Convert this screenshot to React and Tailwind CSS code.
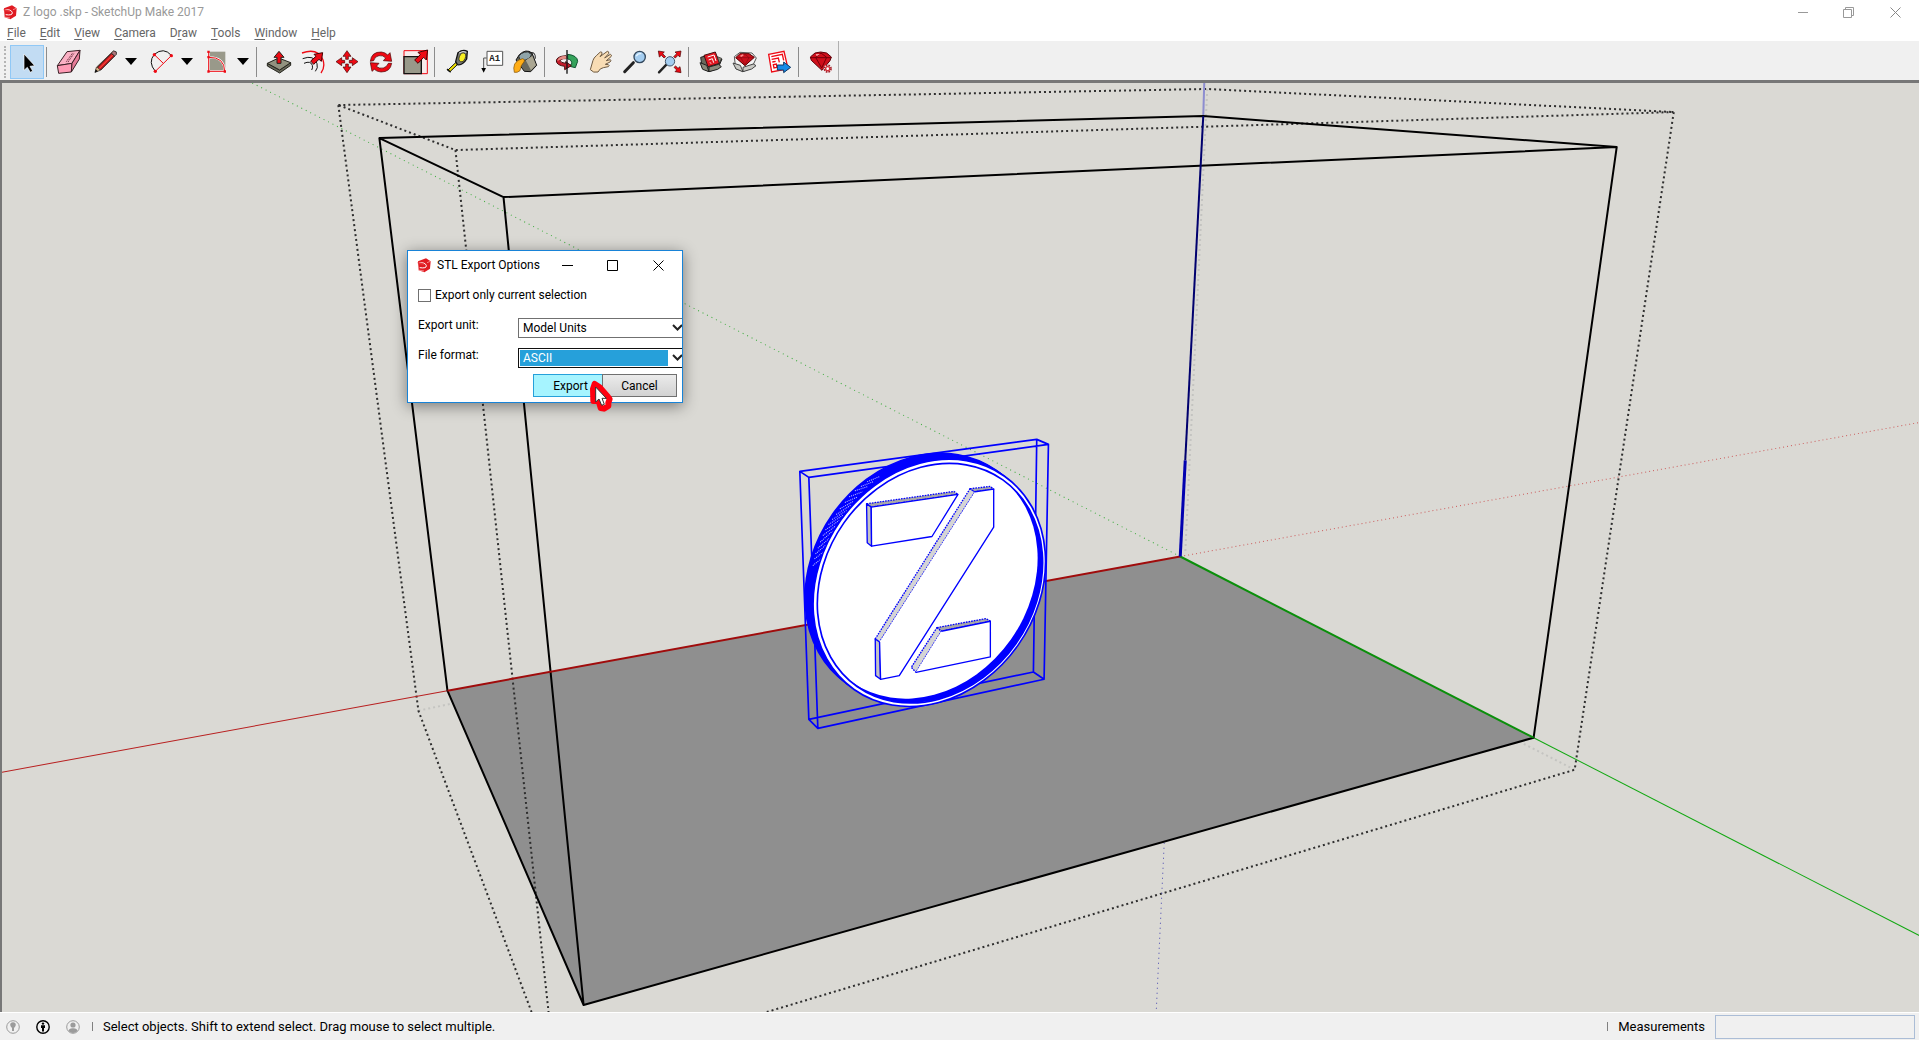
import React from 'react';

const MENUS = [
  ['', 'F', 'ile'],
  ['', 'E', 'dit'],
  ['', 'V', 'iew'],
  ['', 'C', 'amera'],
  ['D', 'r', 'aw'],
  ['', 'T', 'ools'],
  ['', 'W', 'indow'],
  ['', 'H', 'elp'],
];

const RED = '#ee0a14';

/** Small SketchUp mark used in both title bars */
const Logo = () => (
  <svg className="h-[15px] w-[14px] shrink-0" viewBox="8 10 42 45" aria-hidden="true">
    <path d="M11 20 35 11 49 20 47 42 30 53 13 47Z" fill="#e01b22" />
    <path d="M14 25Q33 22 36 33Q37 42 16 39" fill="none" stroke="#fff" strokeWidth="3" />
    <path d="M10 22 30 27 30 31 11 28Z" fill="#e8353b" />
    <path d="M12 46 29 49M38 24 48 20" fill="none" stroke="#ffb9b9" strokeWidth="2" />
  </svg>
);

/** 30px drawing centred on (cx, cy) of the icon sheet, three sheet units per pixel */
const Icon = ({ cx, cy = 186, children }) => (
  <svg className="h-[30px] w-[30px] shrink-0" viewBox={`${cx - 45} ${cy - 45} 90 90`} aria-hidden="true">
    {children}
  </svg>
);

const Tool = ({ label, active, children }) => (
  <button
    type="button"
    aria-label={label}
    className={`flex h-[34px] w-[34px] shrink-0 items-center justify-center border ${
      active ? 'border-[#90c8f6] bg-[#c2dcf3]' : 'border-transparent'
    }`}
  >
    {children}
  </button>
);

const SplitTool = ({ label, children }) => (
  <div className="flex w-14 shrink-0 items-center pl-1">
    <button type="button" aria-label={label}>{children}</button>
    <button type="button" aria-label={`${label} options`} className="flex h-7 w-[22px] items-center justify-center">
      <svg className="h-[7px] w-3" viewBox="0 0 12 7" aria-hidden="true"><path d="M0 0H12L6 7Z" fill="#000" /></svg>
    </button>
  </div>
);

const Divider = () => <div className="mr-[5px] ml-[2px] h-[30px] w-px shrink-0 bg-[#8c8c8c]" />;

const Toolbar = () => (
  <div className="flex h-[39px] items-center bg-[#f0f0f0]">
    <div className="flex h-full items-center border-r border-[#b0b0b0] pt-[2px]">
      <div className="ml-1 h-8 w-[6px] border-l-2 border-dotted border-[#b4b4b4]" />
      <Tool label="Select" active>
        <Icon cx={81}><path d="M72 162V211L82 202L91 217L98 213L90 199L104 197Z" fill="#000" stroke="#fff" strokeWidth="2" /></Icon>
      </Tool>
      <Divider />
      <Tool label="Eraser">
        <Icon cx={207}>
          <g stroke="#3a2026" strokeWidth="3" strokeLinejoin="round">
            <path d="M172 197 201 155 240 151 216 190Z" fill="#fbb0c4" />
            <path d="M172 197 216 190 214 216 176 220Z" fill="#ff9bb5" />
            <path d="M216 190 240 151 238 177 214 216Z" fill="#e77b98" />
          </g>
          <path d="M199 185 218 159M204 186 222 160" stroke="#69303f" strokeWidth="3" strokeDasharray="4 2" />
        </Icon>
      </Tool>
      <SplitTool label="Line">
        <Icon cx={315}>
          <path d="M285 217 289 202 340 153 348 155 349 162 301 211Z" fill="#d9b184" stroke="#222" strokeWidth="2" />
          <path d="M292 202 334 160 344 168 302 210Z" fill="#d0161c" stroke="#222" strokeWidth="3" />
          <path d="M297 206 338 165" stroke="#ff5b4a" strokeWidth="3" />
          <path d="M334 159 341 153 349 156 349 163 344 168Z" fill="#b0777b" stroke="#222" strokeWidth="2" />
          <path d="M284 218 287 208 294 214Z" fill="#111" />
        </Icon>
      </SplitTool>
      <SplitTool label="2 Point Arc">
        <Icon cx={483}>
          <path d="M463 163Q491 140 514 166M463 163Q443 187 466 214" fill="none" stroke="#111" strokeWidth="3" />
          <path d="M463 164 490 190M514 167 466 214" stroke={RED} strokeWidth="3" />
          <g fill={RED}><circle cx="463" cy="164" r="5" /><circle cx="514" cy="167" r="5" /><circle cx="466" cy="214" r="5" /></g>
        </Icon>
      </SplitTool>
      <SplitTool label="Rectangle">
        <Icon cx={651}>
          <path d="M626 155H676V215H626Z" fill="#99998a" />
          <path d="M626 157V214H674Q674 171 626 172" fill="none" stroke="#fff" strokeWidth="6" />
          <path d="M626 157V214H674Q674 171 626 172" fill="none" stroke={RED} strokeWidth="3" />
          <g fill={RED}><path d="M622 152h7v7h-7zM622 168h7v7h-7zM622 211h7v7h-7zM671 211h7v7h-7z" /></g>
        </Icon>
      </SplitTool>
      <Divider />
      <Tool label="Push/Pull">
        <Icon cx={837}>
          <g stroke="#23231c" strokeWidth="3" strokeLinejoin="round">
            <path d="M802 190V198L839 219L872 196V188L839 210Z" fill="#68685a" />
            <path d="M802 190 836 174 872 188 839 210Z" fill="#929280" />
            <path d="M831 190V172H822L837 154L852 172H843V190Z" fill={RED} />
          </g>
        </Icon>
      </Tool>
      <Tool label="Offset">
        <Icon cx={939}>
          <path d="M906 159Q953 142 969 180Q976 202 963 219" fill="none" stroke={RED} strokeWidth="4" />
          <path d="M908 176Q942 163 951 191Q955 204 946 214M912 190Q932 181 937 196Q939 204 935 210" fill="none" stroke="#151515" strokeWidth="3" />
          <path d="M932 183 948 169 942 163 968 158 964 184 957 178 941 193Z" fill={RED} stroke="#400" strokeWidth="3" />
        </Icon>
      </Tool>
      <Tool label="Move">
        <Icon cx={1041}>
          <g fill={RED} stroke="#400" strokeWidth="2">
            {[0, 90, 180, 270].map((a) => (
              <path key={a} transform={`rotate(${a} 1041 185)`} d="M1037 178V169H1029L1041 152L1053 169H1045V178Z" />
            ))}
          </g>
        </Icon>
      </Tool>
      <Tool label="Rotate">
        <Icon cx={1143}>
          <g fill={RED} stroke="#400" strokeWidth="2">
            <path d="M1111 184Q1114 155 1144 156Q1156 157 1163 165L1170 158L1175 184L1150 182L1157 174Q1149 165 1137 167Q1124 169 1121 182Z" />
            <path d="M1175 190Q1171 216 1143 216Q1130 215 1123 208L1116 214L1111 188L1137 190L1129 199Q1138 207 1150 204Q1161 201 1165 190Z" />
          </g>
        </Icon>
      </Tool>
      <Tool label="Scale">
        <Icon cx={1245}>
          <path d="M1212 152H1282V221H1212Z" fill="#f7ecec" stroke={RED} strokeWidth="3" />
          <path d="M1212 170H1264V221H1212Z" fill="#99998a" stroke="#111" strokeWidth="4" />
          <path d="M1244 180 1261 164 1254 157 1283 150 1279 180 1271 172 1254 190Z" fill={RED} stroke="#400" strokeWidth="3" />
        </Icon>
      </Tool>
      <Divider />
      <Tool label="Tape Measure">
        <Icon cx={81} cy={66}>
          <path d="M53 91 79 66 84 72 60 95Z" fill="#f4e500" stroke="#111" strokeWidth="3" />
          <path d="M51 87 62 97" stroke="#111" strokeWidth="4" />
          <path d="M77 65 84 38Q99 27 112 34L110 57Q98 77 82 74Z" fill="#75756d" stroke="#111" strokeWidth="4" />
          <ellipse cx="97" cy="52" rx="9" ry="14" fill="#f8ee22" stroke="#222" strokeWidth="2" transform="rotate(20 97 52)" />
          <path d="M87 39Q100 31 109 37" fill="none" stroke="#ddd" strokeWidth="3" />
        </Icon>
      </Tool>
      <Tool label="Text">
        <Icon cx={183} cy={66}>
          <path d="M171 34H218V76H171Z" fill="#fff" stroke="#555" strokeWidth="3" />
          <path d="M170 54H161V86" fill="none" stroke="#555" strokeWidth="3" />
          <path d="M154 84H168L161 98Z" fill="#000" />
          <text x="194" y="64" textAnchor="middle" fontFamily="Liberation Mono, monospace" fontWeight="700" fontSize="27" fill="#222">A1</text>
        </Icon>
      </Tool>
      <Tool label="Paint Bucket">
        <Icon cx={279} cy={66}>
          <path d="M262 44Q282 25 300 39L314 76L296 95L277 94L252 60Z" fill="#68685d" stroke="#111" strokeWidth="3" />
          <path d="M260 48Q276 30 297 38Q302 52 281 60Q263 67 260 48Z" fill="#8fa4a9" stroke="#222" strokeWidth="3" />
          <path d="M281 61 301 48 312 75 297 91Z" fill="#aaa692" />
          <path d="M292 40Q311 31 310 56" fill="none" stroke="#222" strokeWidth="3" />
          <path d="M248 72Q256 58 272 56Q281 58 276 66Q266 75 264 92Q256 99 247 97Q243 84 248 72Z" fill="#ffad16" stroke="#7a4a00" strokeWidth="2" />
        </Icon>
      </Tool>
      <Divider />
      <Tool label="Orbit">
        <Icon cx={411} cy={66}>
          <path d="M413 43Q442 46 443 64L436 83L415 78L425 73Q427 59 413 57Z" fill="#35a35b" stroke="#153" strokeWidth="3" />
          <path d="M408 47Q379 49 379 63Q380 76 404 79V89L424 77L407 65V70Q391 68 391 62Q393 55 408 56Z" fill="#c61c2c" stroke="#411" strokeWidth="3" />
          <path d="M412 56Q391 55 382 64Q382 49 408 47Z" fill="#e48d85" />
          <path d="M411 30V101" stroke="#111" strokeWidth="4" />
        </Icon>
      </Tool>
      <Tool label="Pan">
        <Icon cx={513} cy={66}>
          <path d="M481 89 489 61Q491 54 499 47L511 36Q517 34 516 42L510 50L532 34Q538 34 536 41L524 54L541 43Q547 45 543 50L529 62L541 59Q545 62 540 66L526 73L535 74Q540 77 535 80L520 83Q510 84 504 96Q490 100 481 89Z" fill="#f8dcb4" stroke="#6e5a42" strokeWidth="3" />
        </Icon>
      </Tool>
      <Tool label="Zoom">
        <Icon cx={615} cy={66}>
          <path d="M584 95 610 68" stroke="#222" strokeWidth="9" strokeLinecap="round" />
          <circle cx="629" cy="51" r="17" fill="#a4cdf0" stroke="#34495e" strokeWidth="4" />
          <path d="M619 49Q623 39 634 41" fill="none" stroke="#e5f4ff" strokeWidth="4" />
        </Icon>
      </Tool>
      <Tool label="Zoom Extents">
        <Icon cx={717} cy={66}>
          <path d="M687 97 709 74" stroke="#222" strokeWidth="7" strokeLinecap="round" />
          <circle cx="720" cy="64" r="14" fill="#a4cdf0" stroke="#46586c" strokeWidth="3" />
          <g fill={RED} stroke="#400" strokeWidth="2">
            <path d="M685 33 703 36 698 41 707 50 702 54 694 46 688 51Z" />
            <path d="M753 33 735 36 740 41 731 50 736 54 744 46 750 51Z" />
            <path d="M753 98 735 95 740 90 732 82 737 78 744 85 750 80Z" />
          </g>
        </Icon>
      </Tool>
      <Divider />
      <Tool label="3D Warehouse">
        <Icon cx={843} cy={66}>
          <path d="M812 52 826 48 838 66 866 62 876 57 864 85 837 95 817 85Z" fill="#69695c" stroke="#222" strokeWidth="3" />
          <path d="M822 46 856 36 869 70 834 80Z" fill="#e31722" stroke="#411" strokeWidth="3" />
          <path d="M833 51 852 45 858 63M836 60 847 56 851 68M840 67 843 71" fill="none" stroke="#fff" strokeWidth="3" />
          <path d="M810 68 830 76 837 95 818 88ZM837 81 866 73 874 80 863 88 837 95Z" fill="#8a8a7b" stroke="#222" strokeWidth="3" />
          <path d="M862 50 875 55 868 70Z" fill="#8a8a7b" stroke="#222" strokeWidth="2" />
        </Icon>
      </Tool>
      <Tool label="Extension Warehouse">
        <Icon cx={945} cy={66}>
          <path d="M913 50 930 37 966 39 979 54 965 84 938 95 917 85Z" fill="#f4f4f4" stroke="#555" strokeWidth="3" />
          <path d="M917 53 930 41H957L973 52L945 77Z" fill="#ca101c" stroke="#500" strokeWidth="3" />
          <path d="M918 53H972M932 53 945 74 957 53 944 42Z" fill="none" stroke="#8d0710" strokeWidth="2" />
          <path d="M929 48 937 43 942 45 935 51Z" fill="#f88" />
          <path d="M909 69 931 76 939 95 918 87ZM939 82 970 72 978 77 965 87 939 95Z" fill="#c9c9c4" stroke="#444" strokeWidth="3" />
        </Icon>
      </Tool>
      <Tool label="Send to LayOut">
        <Icon cx={1047} cy={66}>
          <path d="M1016 43 1062 34 1074 86 1025 96Z" fill="#fff" stroke={RED} strokeWidth="4" />
          <path d="M1024 50 1057 43 1061 61M1025 58 1045 54 1048 67M1027 66 1037 64M1030 74 1039 72 1041 82 1032 84Z" fill="none" stroke={RED} strokeWidth="4" />
          <path d="M1042 75H1061V66L1082 82L1061 98V90H1042Z" fill="#168be8" stroke="#123a66" strokeWidth="3" />
        </Icon>
      </Tool>
      <Divider />
      <Tool label="Extension Manager">
        <Icon cx={1173} cy={66}>
          <path d="M1141 51 1155 39 1172 36 1190 39 1204 51 1200 62 1176 91 1144 61Z" fill="#cf0f1b" stroke="#5d0008" strokeWidth="3" />
          <path d="M1141 53H1204M1157 52 1175 84 1190 52 1173 39Z" fill="none" stroke="#750009" strokeWidth="3" />
          <path d="M1157 42H1170L1160 49Z" fill="#ff9a9c" />
          <circle cx="1193" cy="86" r="12" fill="#f0f0f0" />
          <circle cx="1193" cy="86" r="10" fill="none" stroke="#a41d26" strokeWidth="5" strokeDasharray="5 3" />
          <circle cx="1193" cy="86" r="6" fill="#fff" stroke="#d22f38" strokeWidth="4" />
        </Icon>
      </Tool>
    </div>
  </div>
);

/** The coin's face, rim and bounding box share one local coordinate space */
const Coin = () => (
  <g transform="translate(780 420) scale(0.33333)" strokeLinejoin="round" fill="none">
    <clipPath id="rim">
      <ellipse cx="450" cy="488" rx="379" ry="315" transform="rotate(-54.8 450 488)" />
    </clipPath>
    <g stroke="#0000ff" strokeWidth="5">
      <path d="M60 153 770 57 805 72 87 171ZM60 153 87 896 114 923 87 171M114 923 792 776 805 72M770 57 760 754 792 776M760 754 87 896" />
      <g fill="#0000ff">
        <ellipse cx="423" cy="468" rx="390" ry="324" transform="rotate(-54.8 423 468)" />
        <ellipse cx="431" cy="474" rx="390" ry="324" transform="rotate(-54.8 431 474)" />
        <ellipse cx="439" cy="480" rx="390" ry="324" transform="rotate(-54.8 439 480)" />
      </g>
    </g>
    <path d="M99 435 130 410M104 415 134 392M107 400 140 372M114 383 148 354M121 365 158 332M129 345 168 316M137 328 178 300M146 312 190 284M157 297 201 270M169 282 212 255M180 265 222 242M195 246 232 230M208 229 248 214M225 211 262 199M243 198 280 184M262 184 300 168" stroke="#c9c9ff" strokeWidth="3" strokeDasharray="3 3" />
    <ellipse cx="448" cy="487" rx="391" ry="325" transform="rotate(-54.8 448 487)" fill="#fff" stroke="#0000ff" strokeWidth="5" />
    <g clipPath="url(#rim)">
      <path d="M60 60H840V900H60Z" fill="#0000ff" />
      <ellipse cx="435" cy="475" rx="379" ry="315" transform="rotate(-54.8 435 475)" fill="#fff" />
    </g>
    <ellipse cx="450" cy="488" rx="379" ry="315" transform="rotate(-54.8 450 488)" stroke="#0000ff" strokeWidth="5" />
    <g stroke="#0000ff" strokeWidth="4">
      <path d="M260 250 522 213 534 222 274 260Z" fill="#a8a8a8" strokeDasharray="5 3" />
      <path d="M260 250 274 260 275 377 262 367Z" fill="#c4c4c4" />
      <path d="M274 260 534 222 456 348 275 377Z" fill="#fff" />
      <path d="M286 655 570 205 585 214 299 664Z" fill="#d4d4d4" strokeDasharray="5 3" />
      <path d="M570 205 630 198 641 206 585 214Z" fill="#a8a8a8" strokeDasharray="5 3" />
      <path d="M286 655 299 664 302 776 287 765Z" fill="#c4c4c4" />
      <path d="M585 214 641 206V320L358 765 302 776 299 664" fill="#fff" />
      <path d="M471 621 618 594 631 602 484 632Z" fill="#a8a8a8" strokeDasharray="5 3" />
      <path d="M471 621 484 632 408 755 394 740Z" fill="#d4d4d4" strokeDasharray="5 3" />
      <path d="M484 632 631 602V709L408 755" fill="#fff" />
    </g>
  </g>
);

const Scene = () => (
  <svg className="block h-full w-full" viewBox="2 83 1917 928" preserveAspectRatio="xMidYMid slice" fill="none" role="img" aria-label="Model view">
    <path d="M448 690 1180 556 1533 737 584 1004Z" fill="#8f8f8f" />

    {/* dotted bounds of the group being edited */}
    <g stroke="#c4c4c1" strokeWidth="2" strokeDasharray="2 3">
      <path d="M1207 89 1185 553M419 710 452 703M1574 769 1521 742" />
    </g>
    <g stroke="#2e2e2e" strokeWidth="2" strokeDasharray="2 3">
      <path d="M339 105 1207 89 1673 112 456 150ZM339 105 419 710 532 1011M1673 112 1574 769 767 1011" />
      <path d="M456 150 549 1011" />
    </g>

    {/* axes */}
    <path d="M0 772 448 690" stroke="#b82020" />
    <path d="M1180 556 1919 422" stroke="#cc5c5c" strokeDasharray="1 3" />
    <path d="M253 83 1180 556" stroke="#3dac3d" strokeDasharray="1 4" />
    <path d="M1533 737 1919 935" stroke="#12a812" />
    <path d="M1204 83 1203 116" stroke="#8d8dd0" strokeWidth="2" />
    <path d="M1164 842 1156 1011" stroke="#4444b0" strokeDasharray="1 4" />

    {/* solid box */}
    <g stroke="#000" strokeWidth="2" strokeLinejoin="round">
      <path d="M380 138 1203 116 1616 147 504 197ZM380 138 448 690 584 1004 504 197M584 1004 1533 737 1616 147" />
    </g>
    <path d="M448 690 1180 556" stroke="#a00c0c" strokeWidth="2" />
    <path d="M1180 556 1533 737" stroke="#0b8f0b" strokeWidth="2" />
    <path d="M1203 116 1185 460" stroke="#00006e" strokeWidth="2" />
    <path d="M1185 460 1180 556" stroke="#0000b0" strokeWidth="3" />
    <Coin />
  </svg>
);

const Chevron = () => (
  <svg className="pointer-events-none h-2 w-[11px] shrink-0" viewBox="0 0 11 8" aria-hidden="true">
    <path d="M1 1 5.5 5.5 10 1" fill="none" stroke="#222" strokeWidth="2" />
  </svg>
);

const ExportDialog = () => (
  <div
    role="dialog"
    aria-label="STL Export Options"
    className="absolute top-[167px] left-[405px] h-[153px] w-[276px] border border-[#1883d7] bg-white text-xs text-black shadow-[0_3px_14px_rgba(0,0,0,0.45)]"
  >
    <div className="h-full overflow-hidden">
      <div className="flex h-7 items-center pl-[9px]">
        <Logo />
        <h2 className="ml-[6px] flex-1 whitespace-nowrap">STL Export Options</h2>
        <button type="button" aria-label="Minimize" className="flex h-full w-[45px] items-center justify-center">
          <svg className="h-[11px] w-[11px]" viewBox="0 0 11 11"><path d="M0 5.5H11" stroke="#000" /></svg>
        </button>
        <button type="button" aria-label="Maximize" className="flex h-full w-[45px] items-center justify-center">
          <svg className="h-[11px] w-[11px]" viewBox="0 0 11 11"><path d="M.5 .5H10.5V10.5H.5Z" fill="none" stroke="#000" /></svg>
        </button>
        <button type="button" aria-label="Close" className="flex h-full w-[47px] items-center justify-center">
          <svg className="h-[11px] w-[11px]" viewBox="0 0 11 11"><path d="M.5 .5 10.5 10.5M10.5 .5 .5 10.5" stroke="#000" /></svg>
        </button>
      </div>

      <form className="pt-[6px] pl-[10px]" onSubmit={(e) => e.preventDefault()}>
        <label className="flex h-5 items-center gap-1 whitespace-nowrap">
          <input type="checkbox" className="h-[13px] w-[13px] appearance-none border border-[#707070] bg-white" />
          Export only current selection
        </label>
        <div className="mt-[13px] flex items-start">
          <label htmlFor="unit" className="w-[100px] shrink-0 leading-[14px]">Export unit:</label>
          <div className="flex h-5 w-[170px] shrink-0 items-center border border-[#707070] px-px">
            <select id="unit" className="h-4 w-[152px] appearance-none pl-[3px] leading-4 outline-none" defaultValue="Model Units">
              <option>Model Units</option>
              <option>Meters</option>
            </select>
            <Chevron />
          </div>
        </div>
        <div className="mt-[10px] flex items-start">
          <label htmlFor="format" className="w-[100px] shrink-0 leading-[14px]">File format:</label>
          <div className="flex h-5 w-[170px] shrink-0 items-center gap-1 border border-[#111] px-px">
            <select id="format" className="h-4 w-[148px] appearance-none bg-[#26a0da] pl-[3px] leading-4 text-white outline-none" defaultValue="ASCII">
              <option>ASCII</option>
              <option>Binary</option>
            </select>
            <Chevron />
          </div>
        </div>
        <div className="mt-[6px] flex justify-end pr-[5px]">
          <button type="submit" className="h-[23px] w-[69px] border border-r-0 border-[#26a0da] bg-[#a6f4ff] pl-[5px]">Export</button>
          <button type="button" className="h-[23px] w-[75px] border border-[#707070] bg-linear-to-b from-[#ebebeb] to-[#d2d2d2]">Cancel</button>
        </div>
      </form>
    </div>

    {/* highlighted mouse pointer */}
    <svg className="pointer-events-none absolute top-[128px] left-[180px] h-[34px] w-[26px]" viewBox="577 415 78 102" aria-hidden="true">
      <path d="M597 430 592 445 593 481 609 481 615 502 625 504 638 496 638 486 642 475 634 465 612 440Z" fill="#fff" stroke="#ff0010" strokeWidth="18" strokeLinejoin="round" />
      <path d="M600 439V484L610 475L618 494L626 491L619 473H632Z" fill="#fff" stroke="#333" strokeWidth="3" />
    </svg>
  </div>
);

const StatusBar = () => (
  <footer className="flex h-7 items-center border-t border-white bg-[#f0f0f0] pr-1 pl-[6px] text-[13px] text-black">
    <button type="button" aria-label="Geo-location">
      <svg className="h-[14px] w-[14px]" viewBox="0 0 14 14">
        <circle cx="7" cy="7" r="6.3" fill="none" stroke="#9b9b9b" />
        <path d="M4.2 5A2.8 2.8 0 0 1 9.8 5Q9.6 6.5 8 8V11H6V8Q4.4 6.5 4.2 5Z" fill="#9b9b9b" />
      </svg>
    </button>
    <button type="button" aria-label="Credits" className="ml-4">
      <svg className="h-[14px] w-[14px]" viewBox="0 0 14 14">
        <circle cx="7" cy="7" r="6.2" fill="none" stroke="#000" strokeWidth="1.4" />
        <circle cx="7" cy="3.6" r="1.2" fill="#000" />
        <path d="M5 5.2H9V8H8V11.5H6V8H5Z" fill="#000" />
      </svg>
    </button>
    <button type="button" aria-label="Sign in" className="ml-4">
      <svg className="h-[14px] w-[14px]" viewBox="0 0 14 14">
        <circle cx="7" cy="7" r="6.3" fill="none" stroke="#9b9b9b" />
        <circle cx="7" cy="5" r="2.6" fill="#9b9b9b" />
        <path d="M2.5 11Q3 8 7 8.2Q11 8 11.5 11Q7 15 2.5 11Z" fill="#9b9b9b" />
      </svg>
    </button>
    <div className="ml-3 h-[9px] w-px bg-[#808080]" />
    <p className="ml-[10px] flex-1 whitespace-nowrap">Select objects. Shift to extend select. Drag mouse to select multiple.</p>
    <div className="mr-[10px] h-[9px] w-px bg-[#808080]" />
    <label htmlFor="measurements">Measurements</label>
    <input id="measurements" type="text" className="ml-[10px] h-6 w-[200px] border border-[#abbdd6] bg-[#f0f0f0] px-1 outline-none" />
  </footer>
);

export default function App() {
  return (
    <div className="flex h-screen flex-col overflow-hidden bg-white font-[Roboto,'Open_Sans',sans-serif]">
      <header className="h-[41px] shrink-0 text-xs">
        <div className="flex h-6 items-center pl-[3px] text-[#999]">
          <Logo />
          <h1 className="ml-[6px] flex-1">Z logo .skp - SketchUp Make 2017</h1>
          <button type="button" aria-label="Minimize" className="flex h-5 w-[45px] items-center justify-center">
            <svg className="h-[11px] w-[11px]" viewBox="0 0 11 11"><path d="M0 5.5H10" stroke="#999" /></svg>
          </button>
          <button type="button" aria-label="Restore" className="flex h-5 w-[45px] items-center justify-center">
            <svg className="h-[11px] w-[11px]" viewBox="0 0 11 11"><path d="M.5 2.5H8.5V10.5H.5ZM2.5 2V.5H10.5V8.5H9" fill="none" stroke="#999" /></svg>
          </button>
          <button type="button" aria-label="Close" className="flex h-5 w-12 items-center justify-center">
            <svg className="h-[11px] w-[11px]" viewBox="0 0 11 11"><path d="M.5 .5 10.5 10.5M10.5 .5 .5 10.5" stroke="#888" /></svg>
          </button>
        </div>
        <nav className="flex h-[17px] items-center gap-[14px] pl-[7px] text-[#666]">
          {MENUS.map(([pre, key, post]) => (
            <button type="button" key={pre + key + post}>
              {pre}<span className="underline underline-offset-2">{key}</span>{post}
            </button>
          ))}
        </nav>
      </header>
      <Toolbar />
      <main className="relative min-h-0 flex-1 overflow-hidden border-t-[3px] border-l-2 border-[#777] bg-[#dad9d4]">
        <Scene />
        <ExportDialog />
      </main>
      <StatusBar />
    </div>
  );
}
